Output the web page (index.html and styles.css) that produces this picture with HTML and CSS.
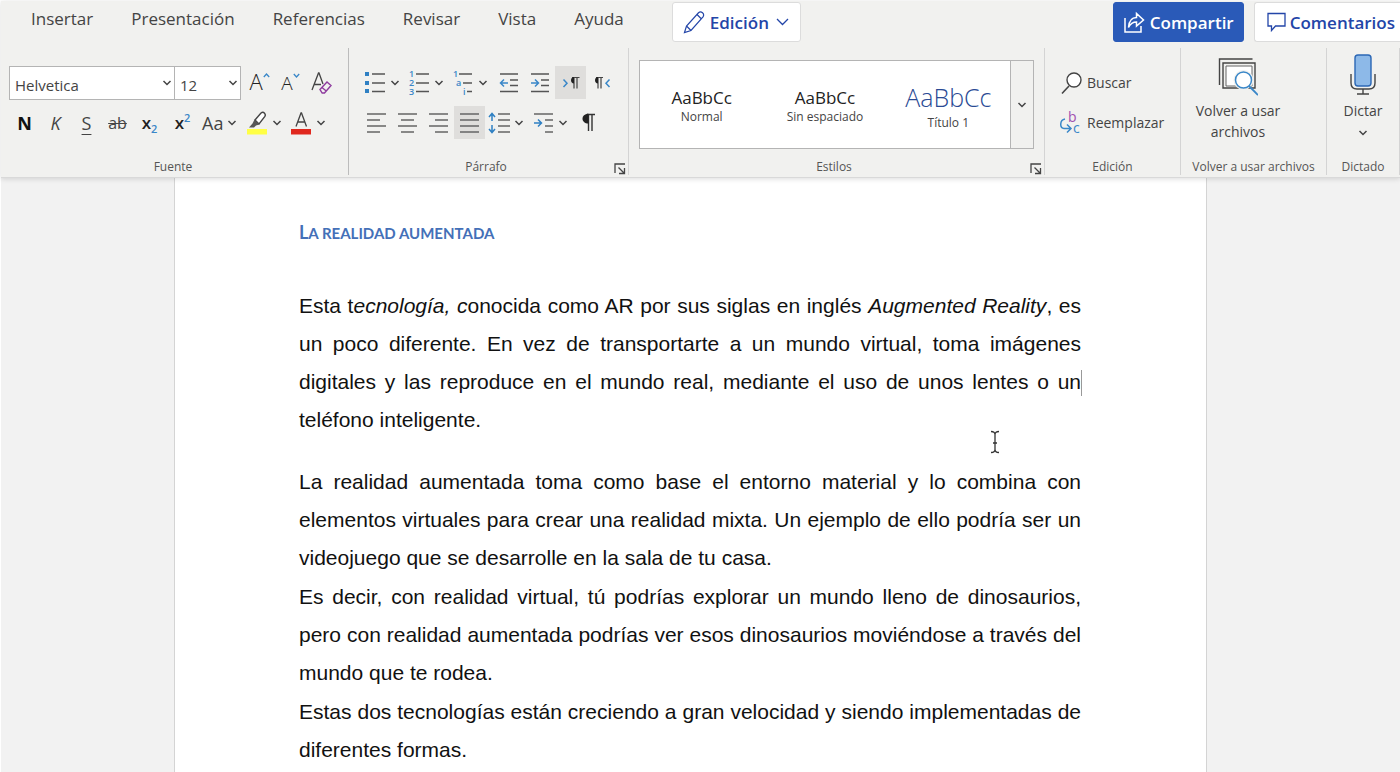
FILE: index.html
```html
<!DOCTYPE html>
<html lang="es">
<head>
<meta charset="utf-8">
<meta name="viewport" content="width=device-width, initial-scale=1">
<title>La realidad aumentada</title>
<link rel="stylesheet" href="styles.css">
</head>
<body>
<svg class="defs" aria-hidden="true">
  <symbol id="chev" viewBox="0 0 10 6"><path d="M1.5 1 5 4.5 8.5 1" fill="none" stroke="currentColor" stroke-width="1.5"/></symbol>
  <symbol id="launch" viewBox="0 0 12 12"><path d="M1 10V1h10M4.500 4.500 10 10M10.500 5v5.500H5" fill="none" stroke="#444" stroke-width="1.300"/></symbol>
</svg>
<header class="ribbon">
  <div class="topbar">
    <nav class="tabs" aria-label="Cinta">
      <a href="#">Insertar</a><a href="#">Presentación</a><a href="#">Referencias</a><a href="#">Revisar</a><a href="#">Vista</a><a href="#">Ayuda</a>
    </nav>
    <button class="pill mode">
      <svg width="22" height="24" viewBox="0 0 22 24" fill="none" stroke="currentColor" stroke-width="1.200"><path d="M1.500 22.500 3.500 16 15.500 2.800q2-1.800 4 0t.5 4L8 20.500zM3.500 16l4.500 4.500M14 4.500l4.500 4.500"/></svg>
      Edición
      <svg width="13" height="8" viewBox="0 0 13 8"><path d="M1 1l5.500 5.500L12 1" fill="none" stroke="currentColor" stroke-width="1.300"/></svg>
    </button>
    <div class="actions">
      <button class="pill share">
        <svg width="22" height="24" viewBox="0 0 22 24" fill="none" stroke="currentColor" stroke-width="1.500"><path d="M2 8v14h16v-6M5.500 17.500C6 11 9 7.500 13.500 7.500V3.500L20.500 10l-7 6v-4c-3.500 0-6 1.500-8 5.500z"/></svg>
        Compartir
      </button>
      <button class="pill comments">
        <svg width="19" height="20" viewBox="0 0 19 20" fill="none" stroke="currentColor" stroke-width="1.300"><path d="M1 1.500h17V14H8.500L4.500 18.500V14H1z"/></svg>
        Comentarios
      </button>
    </div>
  </div>
  <div class="groups">
    <section class="group font">
      <div class="rows">
        <div class="row">
          <label class="combo family"><select aria-label="Fuente"><option>Helvetica</option></select><svg class="chev"><use href="#chev"/></svg></label>
          <label class="combo size"><select aria-label="Tamaño"><option>12</option></select><svg class="chev"><use href="#chev"/></svg></label>
          <div class="sizers">
            <button class="tool grow" aria-label="Aumentar tamaño">A<svg width="7" height="5" viewBox="0 0 7 5"><path d="M.8 4 3.500 1l2.700 3" fill="none" stroke="#3a87c8" stroke-width="1.300"/></svg></button>
            <button class="tool shrink" aria-label="Reducir tamaño">A<svg width="7" height="5" viewBox="0 0 7 5"><path d="M.8 1 3.500 4l2.700-3" fill="none" stroke="#3a87c8" stroke-width="1.300"/></svg></button>
            <button class="tool" aria-label="Borrar formato"><svg width="22" height="24" viewBox="0 0 22 24" fill="none"><path d="M1 19 7.500 2h.5l4 11M3 13.500h7" stroke="#444" stroke-width="1.300"/><path d="m9 18.500 7-7.500 4 3.500-6.500 7.500h-2.300zM11 16.500l4.500 3.700" stroke="#8e3b9e" stroke-width="1.400"/></svg></button>
          </div>
        </div>
        <div class="row">
          <button class="tool bold" aria-label="Negrita">N</button>
          <button class="tool italic" aria-label="Cursiva">K</button>
          <button class="tool under" aria-label="Subrayado">S</button>
          <button class="tool strike" aria-label="Tachado">ab</button>
          <button class="tool script" aria-label="Subíndice"><span>x<sub>2</sub></span></button>
          <button class="tool script" aria-label="Superíndice"><span>x<sup>2</sup></span></button>
          <button class="tool split case" aria-label="Mayúsculas y minúsculas">Aa<svg class="chev"><use href="#chev"/></svg></button>
          <button class="tool split" aria-label="Resaltado"><svg width="22" height="24" viewBox="0 0 22 24"><path d="M1 18h20v5.500H1z" fill="#ffff45"/><path d="M9 9 15 2q2-1.500 3.500.2t.2 3.500L13 13z" fill="#fff" stroke="#444" stroke-width="1.400"/><path d="M8.500 8.500l5 5-3.500 1-2 2H3l3.500-4z" fill="#555"/></svg><svg class="chev"><use href="#chev"/></svg></button>
          <button class="tool split" aria-label="Color de fuente"><svg width="22" height="24" viewBox="0 0 22 24"><path d="M1 18h20v5.500H1z" fill="#e0281e"/><path d="M6 15.500 11 2h.5l5 13.500M7.500 11h7" fill="none" stroke="#444" stroke-width="1.300"/></svg><svg class="chev"><use href="#chev"/></svg></button>
        </div>
      </div>
      <footer><span></span><h2>Fuente</h2><span></span></footer>
    </section>

    <section class="group para">
      <div class="rows">
        <div class="row">
          <button class="tool split" aria-label="Viñetas"><svg width="22" height="24" viewBox="0 0 22 24"><path d="M1 1h4v4H1zM1 10h4v4H1zM1 18h4v4H1z" fill="#2f80c3"/><path d="M8 3h13M8 12h13M8 20.500h13" stroke="#555" stroke-width="1.400"/></svg><svg class="chev"><use href="#chev"/></svg></button>
          <button class="tool split" aria-label="Numeración"><svg class="num" width="22" height="28" viewBox="0 -2 22 28"><text x="1" y="6">1</text><text x="1" y="15">2</text><text x="1" y="24">3</text><path d="M8 3h13M8 12h13M8 20.500h13" stroke="#555" stroke-width="1.400"/></svg><svg class="chev"><use href="#chev"/></svg></button>
          <button class="tool split" aria-label="Lista multinivel"><svg class="num" width="22" height="28" viewBox="0 -2 22 28"><text x="1" y="6">1</text><text x="4" y="15">a</text><text x="11" y="24">i</text><path d="M7 3h13M11 12h9M15 20.500h5" stroke="#555" stroke-width="1.400"/></svg><svg class="chev"><use href="#chev"/></svg></button>
          <button class="tool" aria-label="Reducir sangría"><svg width="20" height="20" viewBox="0 0 20 20" fill="none"><path d="M1 1h18M11 7h8M11 12.500h8M1 18.500h18" stroke="#555" stroke-width="1.400"/><path d="M9 10H2M5 6.500 1.500 10 5 13.500" stroke="#3a87c8" stroke-width="1.500"/></svg></button>
          <button class="tool" aria-label="Aumentar sangría"><svg width="20" height="20" viewBox="0 0 20 20" fill="none"><path d="M1 1h18M11 7h8M11 12.500h8M1 18.500h18" stroke="#555" stroke-width="1.400"/><path d="M1 10h7M5 6.500 8.500 10 5 13.500" stroke="#3a87c8" stroke-width="1.500"/></svg></button>
          <button class="tool on" aria-label="De izquierda a derecha" aria-pressed="true"><svg width="18" height="14" viewBox="0 0 18 14" fill="none"><path d="M1.500 3.500 5 7.200 1.500 11" stroke="#3a87c8" stroke-width="1.500"/><path d="M12 1.500v11M15 1.500v11M10 1.500h7.500" stroke="#444" stroke-width="1.200"/><path d="M12 1C8 1 8 7.500 12 7.500z" fill="#222"/></svg></button>
          <button class="tool" aria-label="De derecha a izquierda"><svg width="18" height="14" viewBox="0 0 18 14" fill="none"><path d="M16.500 3.500 13 7.200l3.500 3.800" stroke="#3a87c8" stroke-width="1.500"/><path d="M5 1.500v11M8 1.500v11M3 1.500h7" stroke="#444" stroke-width="1.200"/><path d="M5 1C1 1 1 7.500 5 7.500z" fill="#222"/></svg></button>
        </div>
        <div class="row">
          <button class="tool" aria-label="Alinear a la izquierda"><svg width="19" height="20" viewBox="0 0 19 20"><path d="M0 1h19M0 7h13M0 13h19M0 19h13" stroke="#666" stroke-width="1.500"/></svg></button>
          <button class="tool" aria-label="Centrar"><svg width="19" height="20" viewBox="0 0 19 20"><path d="M0 1h19M3 7h13M0 13h19M3 19h13" stroke="#666" stroke-width="1.500"/></svg></button>
          <button class="tool" aria-label="Alinear a la derecha"><svg width="19" height="20" viewBox="0 0 19 20"><path d="M0 1h19M6 7h13M0 13h19M6 19h13" stroke="#666" stroke-width="1.500"/></svg></button>
          <button class="tool on" aria-label="Justificar" aria-pressed="true"><svg width="19" height="20" viewBox="0 0 19 20"><path d="M0 1h19M0 7h19M0 13h19M0 19h19" stroke="#666" stroke-width="1.500"/></svg></button>
          <button class="tool split" aria-label="Interlineado"><svg width="22" height="22" viewBox="0 0 22 22" fill="none"><path d="M10 2h12M10 8h12M10 14h12M10 20h12" stroke="#666" stroke-width="1.500"/><path d="M4 9V2M1 5l3-3.500L7 5M4 13v7M1 17l3 3.500L7 17" stroke="#2f80c3" stroke-width="1.500"/></svg><svg class="chev"><use href="#chev"/></svg></button>
          <button class="tool split" aria-label="Sangría especial"><svg width="22" height="22" viewBox="0 0 22 22" fill="none"><path d="M2 2h19M13 8h8M13 14h8M13 20h8" stroke="#666" stroke-width="1.500"/><path d="M2 11h7M6 7.500 9.500 11 6 14.500" stroke="#2f80c3" stroke-width="1.500"/></svg><svg class="chev"><use href="#chev"/></svg></button>
          <button class="tool" aria-label="Mostrar marcas"><svg width="13" height="19" viewBox="0 0 13 19"><path d="M6.500 1v17M10 1v17M5 1.500h8" fill="none" stroke="#333" stroke-width="1.400"/><path d="M6.500.8C-1.500.8-1.500 10.500 6.500 10.500z" fill="#222"/></svg></button>
        </div>
      </div>
      <footer><span></span><h2>Párrafo</h2><button class="launcher" aria-label="Opciones de párrafo"><svg width="12" height="12"><use href="#launch"/></svg></button></footer>
    </section>

    <section class="group styles">
      <div class="gallery">
        <button class="style"><span class="sample">AaBbCc</span><span class="name">Normal</span></button>
        <button class="style"><span class="sample">AaBbCc</span><span class="name">Sin espaciado</span></button>
        <button class="style heading"><span class="sample">AaBbCc</span><span class="name">Título 1</span></button>
        <button class="more" aria-label="Más estilos"><svg class="chev"><use href="#chev"/></svg></button>
      </div>
      <footer><span></span><h2>Estilos</h2><button class="launcher" aria-label="Opciones de estilos"><svg width="12" height="12"><use href="#launch"/></svg></button></footer>
    </section>

    <section class="group edit">
      <div class="rows">
        <button class="wide"><svg width="22" height="24" viewBox="0 0 22 24"><path d="M9 15 2 22.500" stroke="#444" stroke-width="1.600"/><circle cx="14" cy="9" r="7" fill="#fff" stroke="#444" stroke-width="1.400"/></svg>Buscar</button>
        <button class="wide"><svg class="swap" width="22" height="30" viewBox="0 -3 22 30"><text class="b" x="8" y="11">b</text><text class="c" x="13" y="22">c</text><path d="M5 8C-.5 9-.5 17 4 17.500h6M7 13.500l4 4-4 4" fill="none" stroke="#3a87c8" stroke-width="1.500"/></svg>Reemplazar</button>
      </div>
      <footer><span></span><h2>Edición</h2><span></span></footer>
    </section>

    <section class="group reuse">
      <button class="tall"><svg width="40" height="40" viewBox="0 0 40 40" fill="none"><path d="M1.500 28V2h33" stroke="#444" stroke-width="1.400"/><path d="M5 31V6h32v25z" stroke="#444" stroke-width="1.400"/><path d="M8 29V9h26v20z" fill="#fff" stroke="#666"/><circle cx="25.500" cy="23" r="10" fill="#f1f1ef"/><path d="m31 29 9 9" stroke="#3a87c8" stroke-width="1.800"/><circle cx="25.500" cy="23" r="8" fill="#fff" stroke="#3a87c8" stroke-width="1.500"/></svg><span>Volver a usar archivos</span></button>
      <footer><span></span><h2>Volver a usar archivos</h2><span></span></footer>
    </section>

    <section class="group dictate">
      <button class="tall"><svg width="26" height="42" viewBox="0 0 26 42" fill="none"><path d="M1 20v9q0 6 6 6h12q6 0 6-6v-9M13 35v5M7 40h12" stroke="#444" stroke-width="1.400"/><rect x="5" y="1" width="16" height="31" rx="3" fill="#8db9e8" stroke="#2b67b5" stroke-width="1.400"/></svg><span>Dictar</span><svg class="chev"><use href="#chev"/></svg></button>
      <footer><span></span><h2>Dictado</h2><span></span></footer>
    </section>
  </div>
</header>
<main class="canvas">
  <article class="page">
    <h1>La realidad aumentada</h1>
    <p>Esta t<em>ecnología, c</em>onocida como AR por sus siglas en inglés <em>Augmented Reality</em>, es un poco diferente. En vez de transportarte a un mundo virtual, toma imágenes digitales y las reproduce en el mundo real, mediante el uso de unos lentes o un<span class="caret"></span> teléfono inteligente.</p>
    <p class="spaced">La realidad aumentada toma como base el entorno material y lo combina con elementos virtuales para crear una realidad mixta. Un ejemplo de ello podría ser un videojuego que se desarrolle en la sala de tu casa.</p>
    <p>Es decir, con realidad virtual, tú podrías explorar un mundo lleno de dinosaurios, pero con realidad aumentada podrías ver esos dinosaurios moviéndose a través del mundo que te rodea.</p>
    <p>Estas dos tecnologías están creciendo a gran velocidad y siendo implementadas de diferentes formas.</p>
  </article>
  <svg class="pointer" width="10" height="24" viewBox="0 0 10 24" aria-hidden="true"><path d="M1 1.500q4 0 4 3v15q0 3-4 3M9 1.500q-4 0-4 3M5 19.500q0 3 4 3M3 13h4" fill="none" stroke="#333" stroke-width="1.300"/></svg>
</main>
</body>
</html>
```
FILE: styles.css
```css
* { box-sizing: border-box; }

html { height: 100%; }

body {
  margin: 0;
  padding: 1px 0 0 1px;
  height: 100%;
  display: flex;
  flex-direction: column;
  overflow: hidden;
  background: #fff;
  color: #444;
  font-family: "Open Sans", "Noto Sans", sans-serif;
}

button, select { font: inherit; color: inherit; }
button { border: 0; padding: 0; background: none; }
svg { flex: none; display: block; }
.defs { position: absolute; width: 0; height: 0; }
.chev { width: 10px; height: 6px; }

.ribbon {
  position: relative;
  z-index: 1;
  flex: none;
  background: #f1f1ef;
  padding-bottom: 2px;
  border-bottom: 1px solid #d9d9d9;
  box-shadow: 0 1px 5px rgba(0, 0, 0, .14);
}

.topbar { display: flex; height: 47px; padding-top: 1px; }
.tabs { display: flex; gap: 38px; padding: 5px 0 0 30px; font-size: 17px; line-height: 24px; }
.tabs a { color: #444; text-decoration: none; }

.pill {
  display: flex;
  align-items: center;
  gap: 5px;
  height: 40px;
  padding: 0 10px;
  border: 1px solid #dcdcdc;
  border-radius: 3px;
  background: #fff;
  color: #2345a8;
  font-size: 17px;
  font-weight: 600;
  white-space: nowrap;
}
.mode { margin-left: 48px; padding-right: 11px; }
.mode svg:last-child { margin-left: 2px; }
.actions { display: flex; gap: 10px; margin-left: auto; }
.share { padding: 0 9px; background: #2a5ab8; border-color: #2a5ab8; color: #fff; }
.comments { padding: 0 5px 0 12px; gap: 4px; border-right: 0; border-radius: 3px 0 0 3px; }

.groups { display: flex; }
.group {
  display: flex;
  flex-direction: column;
  justify-content: space-between;
  height: 127px;
  border-right: 1px solid #d4d4d4;
}
.group footer {
  display: grid;
  grid-template-columns: 1fr auto 1fr;
  align-items: end;
  height: 17px;
}
.group h2 { margin: 0; font-size: 12px; line-height: 17px; font-weight: 400; color: #555; white-space: nowrap; }
.launcher { justify-self: end; margin-right: 2px; }

.rows { display: flex; flex-direction: column; gap: 7px; padding-top: 18px; }
.row { display: flex; height: 33px; }

.font { width: 348px; border-color: #bcbcbc; }
.font .rows { padding-left: 8px; }
.font footer { padding-right: 3px; }
.para { width: 280px; }
.para .rows { padding-left: 12px; }
.para h2, .styles h2 { margin-right: 5px; }

.combo { position: relative; height: 34px; }
.combo select {
  width: 100%;
  height: 100%;
  padding: 4px 18px 0 5px;
  appearance: none;
  border: 1px solid #b4b4b4;
  border-radius: 0;
  background: #fff;
  font-size: 15px;
}
.combo .chev { position: absolute; right: 3px; top: 14px; pointer-events: none; }
.family { width: 166px; }
.size { width: 67px; margin-left: -1px; }
.sizers { display: flex; margin-left: 3px; }

.tool { display: flex; align-items: center; justify-content: center; width: 31px; font-size: 17px; line-height: 24px; }
.split { width: 44px; justify-content: flex-start; gap: 4px; padding-left: 3px; }
.on { background: #dfdedc; }
.grow, .shrink { align-items: flex-start; padding-top: 3px; }
.grow { font-size: 22px; font-weight: 300; color: #222; }
.shrink { font-size: 19px; font-weight: 300; color: #222; padding-top: 5px; }
.grow svg { margin-top: 4px; }
.shrink svg { margin-top: 2px; }
.bold { font-weight: 700; font-size: 18px; color: #111; }
.italic { font-style: italic; font-size: 18px; }
.under { text-decoration: underline; text-underline-offset: 4px; font-size: 18px; }
.strike { text-decoration: line-through; font-size: 16px; }
.script { width: 33px; font-weight: 600; color: #222; }
.script sub, .script sup { font-size: 11px; line-height: 0; color: #3a87c8; }
.case { font-size: 18px; }
.num text { font-size: 9px; font-weight: 600; fill: #3a87c8; }

.styles { flex: 1; }
.gallery {
  display: grid;
  grid-template-columns: repeat(3, 1fr) 23px;
  height: 89px;
  margin: 12px 10px 0;
  border: 1px solid #b4b4b4;
  background: #fff;
}
.style { display: flex; flex-direction: column; align-items: center; justify-content: center; padding-top: 4px; }
.sample { font-size: 17px; line-height: 20px; color: #222; }
.name { font-size: 12px; line-height: 18px; white-space: nowrap; }
.heading .sample { font-size: 25px; line-height: 32px; font-weight: 300; color: #2a4a94; }
.heading .name { line-height: 20px; }
.more { display: flex; align-items: center; justify-content: center; border-left: 1px solid #b4b4b4; background: #f1f1ef; }

.edit { width: 136px; }
.edit .rows { padding-left: 15px; }
.wide { display: flex; align-items: center; gap: 5px; height: 33px; font-size: 14px; }
.swap .b { font-size: 14px; fill: #a04fb0; }
.swap .c { font-size: 14px; fill: #3a87c8; }

.reuse { width: 146px; }
.dictate { width: 73px; }
.tall { display: flex; flex-direction: column; align-items: center; align-self: center; padding-top: 9px; font-size: 14px; line-height: 21px; }
.tall span { width: 96px; margin-top: 3px; }
.tall .chev { margin-top: 9px; }
.reuse .tall { align-self: flex-start; margin-left: 9px; }
.dictate .tall { padding-top: 6px; }
.dictate .tall span { width: auto; margin-top: 4px; }

.canvas { position: relative; flex: 1; display: flex; background: #f2f2f2; overflow: hidden; }
.page {
  flex: 1;
  margin: 0 193px 0 173px;
  padding: 42px 125px 0 124px;
  border: 1px solid #d4d4d4;
  border-width: 0 1px;
  background: #fff;
  color: #111;
}
.page h1 {
  margin: 0 0 42px;
  font: 700 15px/24px Lato, sans-serif;
  text-transform: uppercase;
  color: #4470b8;
}
.page h1::first-letter { font-size: 18px; }
.page p {
  margin: 0 0 1px;
  font: 21px/38px "Liberation Sans", Arial, sans-serif;
  text-align: justify;
}
.page .spaced { margin-top: 24px; }
.caret { position: relative; }
.caret::after { content: ""; position: absolute; left: 0; top: 0; width: 1px; height: 26px; background: #999; }
.pointer { position: absolute; left: 989px; top: 252px; }
```
